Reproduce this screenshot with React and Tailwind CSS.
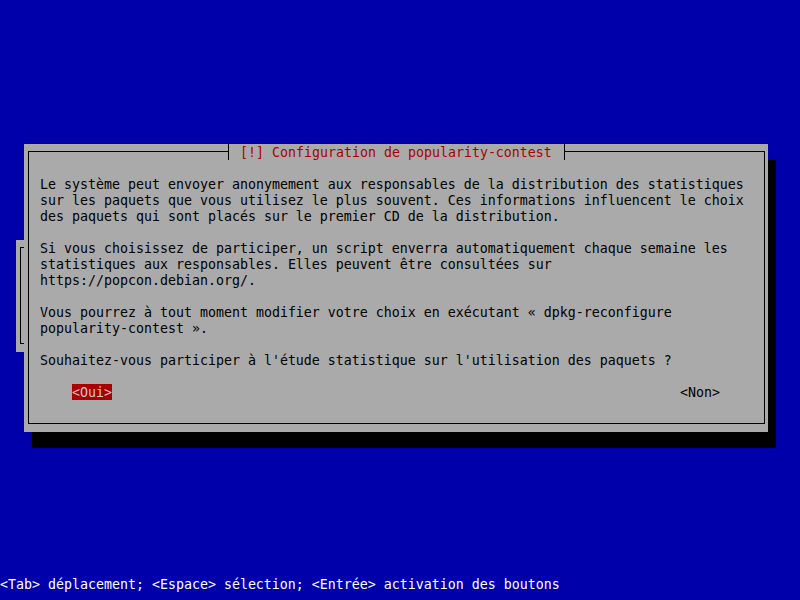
const textLines = [
  'Le système peut envoyer anonymement aux responsables de la distribution des statistiques',
  'sur les paquets que vous utilisez le plus souvent. Ces informations influencent le choix',
  'des paquets qui sont placés sur le premier CD de la distribution.',
  '',
  'Si vous choisissez de participer, un script enverra automatiquement chaque semaine les',
  'statistiques aux responsables. Elles peuvent être consultées sur',
  'https://popcon.debian.org/.',
  '',
  'Vous pourrez à tout moment modifier votre choix en exécutant « dpkg-reconfigure',
  'popularity-contest ».',
  '',
  "Souhaitez-vous participer à l'étude statistique sur l'utilisation des paquets ?",
]

const App = () => {
  return (
    <div className="flex h-[600px] w-[800px] flex-col bg-[#0000aa] font-['DejaVu_Sans_Mono',monospace] text-[13.29px] leading-4">
      <div className="flex pl-4 pt-[144px]">
        {/* window behind the dialog, only its left edge shows */}
        <div className="mt-[96px] h-[112px] w-2 bg-[#aaaaaa] pl-1 pt-[7px]">
          <div className="h-[97px] border-y border-l border-black" />
        </div>

        {/* dialog */}
        <div className="relative h-[288px] w-[744px] bg-[#aaaaaa] pb-2 pl-1 pr-[3px] pt-[7px] shadow-[8px_16px_0_0_#000]">
          <div className="h-full border border-black pl-[11px] pt-6 text-black">
            {textLines.map((line, i) => (
              <div key={i} className="h-4 whitespace-pre pt-px">
                {line}
              </div>
            ))}
            <div className="mt-4 flex h-4 justify-between pl-8 pr-[44px]">
              <span className="whitespace-pre bg-[#aa0000] pt-px text-[#c8c8c8]">{'<Oui>'}</span>
              <span className="whitespace-pre pt-px">{'<Non>'}</span>
            </div>
          </div>

          {/* title over the top border */}
          <div className="absolute left-[204px] top-0 flex h-4">
            <div className="h-4 w-px bg-black" />
            <div className="h-4 w-[335px] whitespace-pre bg-[#aaaaaa] pl-[11px] pt-px text-[#aa0000]">
              [!] Configuration de popularity-contest
            </div>
            <div className="h-4 w-px bg-black" />
          </div>
        </div>
      </div>

      <div className="mt-auto mb-2 h-4 whitespace-pre pt-px text-white">
        {'<Tab> déplacement; <Espace> sélection; <Entrée> activation des boutons'}
      </div>
    </div>
  )
}

export default App
